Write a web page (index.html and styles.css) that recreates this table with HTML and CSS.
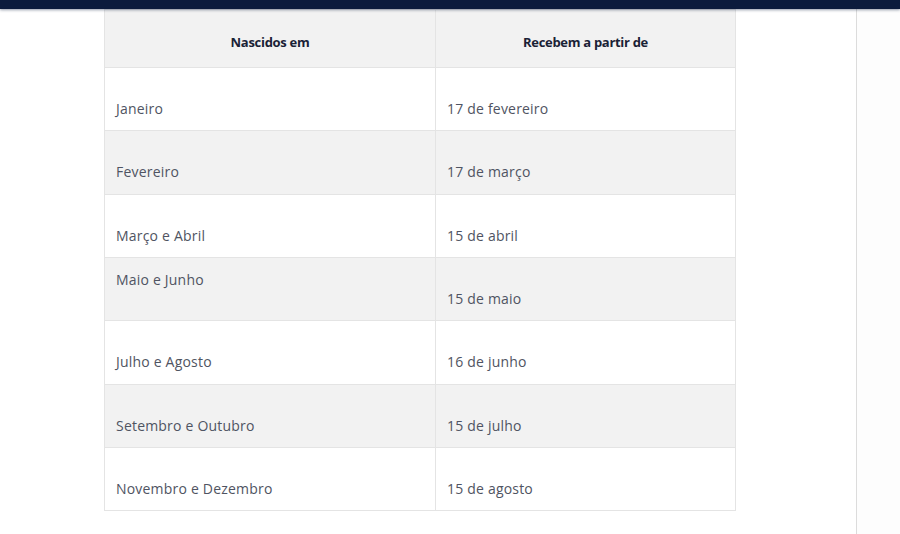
FILE: index.html
```html
<!DOCTYPE html>
<html lang="pt-BR">
<head>
<meta charset="utf-8">
<title>Calendário</title>
<link rel="stylesheet" href="styles.css">
</head>
<body>
<div class="topbar"></div>
<div class="layout">
  <main class="content">
    <table class="schedule">
      <thead>
        <tr><th class="col-a">Nascidos em</th><th class="col-b">Recebem a partir de</th></tr>
      </thead>
      <tbody>
        <tr><td>Janeiro</td><td>17 de fevereiro</td></tr>
        <tr class="alt"><td>Fevereiro</td><td>17 de março</td></tr>
        <tr><td>Março e Abril</td><td>15 de abril</td></tr>
        <tr class="alt"><td class="top">Maio e Junho</td><td>15 de maio</td></tr>
        <tr><td>Julho e Agosto</td><td>16 de junho</td></tr>
        <tr class="alt"><td>Setembro e Outubro</td><td>15 de julho</td></tr>
        <tr><td>Novembro e Dezembro</td><td>15 de agosto</td></tr>
      </tbody>
    </table>
  </main>
  <aside class="side"></aside>
</div>
</body>
</html>
```
FILE: styles.css
```css
html, body {
  margin: 0;
  padding: 0;
  background: #ffffff;
  font-family: "Open Sans", "Noto Sans", sans-serif;
  height: 534px;
  overflow: hidden;
}
.topbar {
  position: relative;
  z-index: 2;
  height: 9px;
  background: #0c1b3d;
  box-shadow: 0 1px 3px rgba(12, 27, 61, 0.45);
}
.layout {
  display: flex;
  height: 525px;
}
.content {
  width: 856px;
  flex: none;
  border-right: 1px solid #dcdcdc;
  box-shadow: 2px 0 3px rgba(0, 0, 0, 0.06);
}
.side {
  flex: 1;
  background: #fdfdfd;
}
.schedule {
  margin-left: 104px;
  width: 632px;
  border-collapse: collapse;
  font-size: 14px;
  letter-spacing: 0.2px;
}
.schedule th, .schedule td {
  border: 1px solid #e4e4e4;
  text-align: left;
  vertical-align: top;
  line-height: 18px;
}
.schedule th {
  background: #f2f2f2;
  color: #1a2236;
  font-size: 13px;
  letter-spacing: -0.3px;
  font-weight: 700;
  text-align: center;
  padding: 23px 12px 16px;
}
.col-a { width: 306px; }
.schedule td {
  color: #4f5462;
  padding: 32px 11px 12.33px;
  height: 18px;
}
.schedule tr.alt td {
  background: #f2f2f2;
}
.schedule td.top {
  padding-top: 13px;
}
```
